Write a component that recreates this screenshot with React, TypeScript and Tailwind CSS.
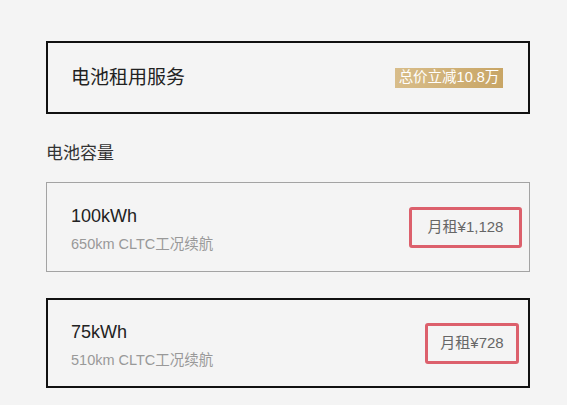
const font = { fontFamily: '"Liberation Sans", "Noto Sans CJK SC", sans-serif' };

const options = [
  { kwh: "100kWh", range: "650km CLTC工况续航", price: "月租¥1,128", selected: false, box: "w-[113px] mr-[7px]" },
  { kwh: "75kWh", range: "510km CLTC工况续航", price: "月租¥728", selected: true, box: "w-[94px] mr-[9px]" },
];

export default function App() {
  return (
    <div className="w-[567px] h-[405px] overflow-hidden bg-[#f4f4f4]" style={font}>
      <div className="pl-[46px] pt-[41px] w-[530px]">
        {/* 电池租用 */}
        <div className="h-[73px] border-2 border-[#111] flex items-center justify-between pl-[23px] pr-[25px]">
          <span className="text-[19px] text-[#222] leading-[24px]">电池租用服务</span>
          <span className="w-[108px] h-[20px] flex items-center justify-center text-[14.5px] leading-none text-white bg-gradient-to-r from-[#d8bd8a] to-[#c8a565]">
            总价立减10.8万
          </span>
        </div>

        <div className="mt-[28px] mb-[16px] h-[24px] leading-[24px] text-[17px] text-[#333]">电池容量</div>

        <div className="flex flex-col gap-[26px]">
          {options.map((o) => (
            <div
              key={o.kwh}
              className={
                "h-[90px] flex items-center justify-between " +
                (o.selected ? "border-2 border-[#111] pl-[23px]" : "border border-[#a3a3a3] pl-[24px]")
              }
            >
              <div className="flex flex-col gap-[6px] pt-[3px]">
                <span className="text-[18px] leading-[24px] text-[#222]">{o.kwh}</span>
                <span className="text-[14.5px] leading-[20px] text-[#999]">{o.range}</span>
              </div>
              <div
                className={
                  "h-[41px] flex items-center justify-center border-[3px] border-[#dc606c] rounded-[3px] text-[15px] text-[#666] " +
                  o.box
                }
              >
                {o.price}
              </div>
            </div>
          ))}
        </div>
      </div>
    </div>
  );
}
